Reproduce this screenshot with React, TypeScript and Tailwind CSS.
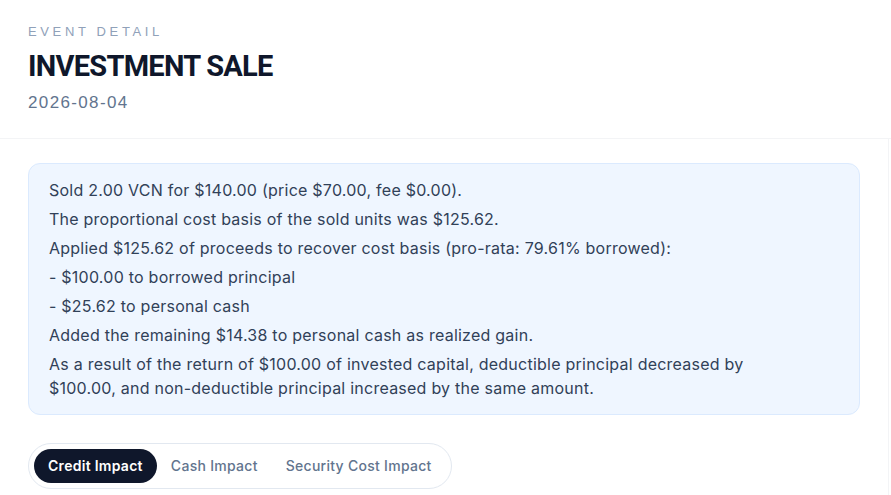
import React from "react";

const lines = [
  "Sold 2.00 VCN for $140.00 (price $70.00, fee $0.00).",
  "The proportional cost basis of the sold units was $125.62.",
  "Applied $125.62 of proceeds to recover cost basis (pro-rata: 79.61% borrowed):",
  "- $100.00 to borrowed principal",
  "- $25.62 to personal cash",
  "Added the remaining $14.38 to personal cash as realized gain.",
  "As a result of the return of $100.00 of invested capital, deductible principal decreased by $100.00, and non-deductible principal increased by the same amount.",
];

const tabs = ["Credit Impact", "Cash Impact", "Security Cost Impact"];

export default function App() {
  const [active, setActive] = React.useState(0);
  return (
    <div className="min-h-screen w-full bg-white font-['Inter',sans-serif]">
      {/* Header */}
      <div className="border-b border-gray-100 px-7 pt-[24px] pb-[23px]">
        <div className="font-['Liberation_Sans',sans-serif] text-[13px] leading-4 tracking-[0.28em] text-slate-400">
          EVENT DETAIL
        </div>
        <h1 className="mt-[8px] font-['Roboto',sans-serif] text-[29px] font-bold leading-9 tracking-[-0.025em] text-slate-900">
          INVESTMENT SALE
        </h1>
        <div className="mt-[7px] font-['Liberation_Sans',sans-serif] text-[17px] leading-6 tracking-[0.08em] text-slate-500">
          2026-08-04
        </div>
      </div>

      {/* Body */}
      <div className="mr-[2px] border-r border-gray-100 px-7 pt-6 pb-8">
        <div className="rounded-xl border border-blue-100 bg-blue-50 px-5 py-[14px] text-[16px] leading-6 tracking-[0.015em] text-slate-700">
          <div className="flex max-w-[740px] flex-col gap-[5px]">
            {lines.map((l) => (
              <p key={l}>{l}</p>
            ))}
          </div>
        </div>

        <div className="mt-[28px] inline-flex items-center rounded-full border border-slate-200 bg-white p-[5px]">
          {tabs.map((t, i) => (
            <button
              key={t}
              onClick={() => setActive(i)}
              className={
                i === active
                  ? "h-[34px] rounded-full bg-slate-900 px-[14px] text-sm font-semibold tracking-[0.02em] text-white"
                  : "h-[34px] rounded-full px-[14px] text-sm font-medium tracking-[0.02em] text-slate-500"
              }
            >
              {t}
            </button>
          ))}
        </div>
      </div>
    </div>
  );
}
